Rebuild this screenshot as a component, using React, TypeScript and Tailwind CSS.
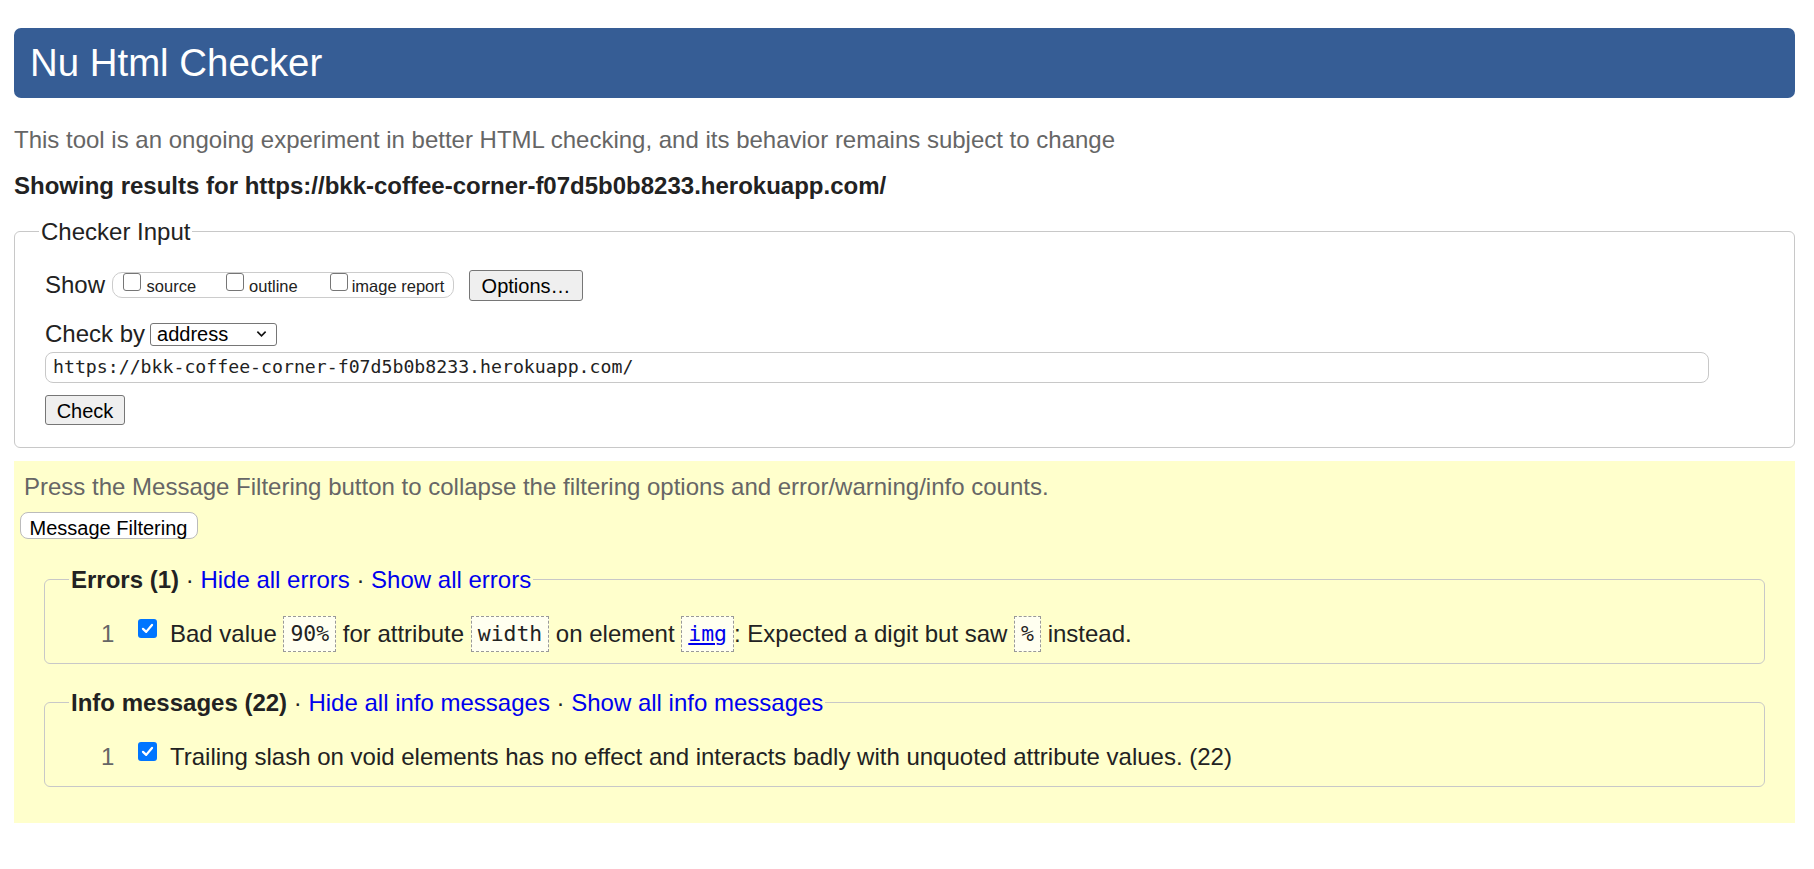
import React from 'react';

function Box({ checked }: { checked?: boolean }) {
  if (checked) {
    return (
      <span className="flex h-[19px] w-[19px] items-center justify-center rounded-[3px] bg-[#0075ff]">
        <svg viewBox="0 0 16 16" className="h-[15px] w-[15px]">
          <path d="M3.2 8.4 L6.6 11.6 L12.8 4.2" fill="none" stroke="#fff" strokeWidth="2.4" strokeLinecap="round" strokeLinejoin="round" />
        </svg>
      </span>
    );
  }
  return <span className="block h-[18px] w-[18px] rounded-[3px] border-[1.5px] border-[#767676] bg-white" />;
}

function Code({ children, link }: { children: React.ReactNode; link?: boolean }) {
  return (
    <code
      className={`inline-block h-[36px] border border-dashed border-[#999] bg-[#fffff0] px-[6px] align-top font-['DejaVu_Sans_Mono',monospace] text-[21.4px] leading-[34px] ${
        link ? 'text-[#0000ee] underline' : 'text-[#222]'
      }`}
    >
      {children}
    </code>
  );
}

function Dot() {
  return <span className="text-[#222]"> · </span>;
}

function Group({
  title,
  hide,
  show,
  children,
}: {
  title: string;
  hide: string;
  show: string;
  children: React.ReactNode;
}) {
  return (
    <fieldset className="mx-[30px] rounded-[6px] border border-[#c8c8c8] pt-[22px] pb-[11px]">
      <legend className="ml-[24px] px-[2px] text-[24px] leading-[28px]">
        <b className="font-bold text-[#222]">{title}</b>
        <Dot />
        <a className="text-[#0000ee]">{hide}</a>
        <Dot />
        <a className="text-[#0000ee]">{show}</a>
      </legend>
      {children}
    </fieldset>
  );
}

function Row({ children }: { children: React.ReactNode }) {
  return (
    <div className="flex h-[36px] items-start pl-[56px]">
      <span className="w-[37px] text-[24px] leading-[36px] text-[#666]">1</span>
      <span className="mt-[3px]">
        <Box checked />
      </span>
      <p className="ml-[13px] whitespace-pre text-[24px] leading-[36px] text-[#222]">{children}</p>
    </div>
  );
}

export default function App() {
  return (
    <div className="min-h-screen bg-white pt-[28px] pr-[19px] pb-[40px] pl-[14px] font-['Liberation_Sans',Arial,sans-serif] text-[#222]">
      {/* Header */}
      <header className="flex h-[70px] items-center rounded-[7px] bg-[#365d95] pl-[16px]">
        <h1 className="text-[38.4px] font-normal leading-none text-white">Nu Html Checker</h1>
      </header>

      <p className="mt-[28px] text-[24px] leading-[28px] text-[#666]">
        This tool is an ongoing experiment in better HTML checking, and its behavior remains subject to change
      </p>
      <p className="mt-[18px] text-[24px] font-bold leading-[28px] text-[#222]">
        Showing results for https://bkk-coffee-corner-f07d5b0b8233.herokuapp.com/
      </p>

      {/* Checker input */}
      <fieldset className="mt-[17.5px] rounded-[6px] border border-[#c8c8c8] px-[30px] pt-[24px] pb-[22px]">
        <legend className="ml-[-6px] px-[2px] text-[24px] leading-[28px]">Checker Input</legend>

        <div className="flex h-[31px] items-center">
          <span className="text-[24px] leading-[28px]">Show</span>
          <div className="ml-[7px] flex h-[26px] w-[342px] items-start rounded-[10px] border border-[#ccc] pl-[10px]">
            <Box />
            <span className="ml-[5.5px] mt-[3.5px] text-[16.5px] leading-[19px]">source</span>
            <span className="ml-[30px]">
              <Box />
            </span>
            <span className="ml-[5px] mt-[3.5px] text-[16.5px] leading-[19px]">outline</span>
            <span className="ml-[32px]">
              <Box />
            </span>
            <span className="ml-[4px] mt-[3.5px] text-[16.5px] leading-[19px]">image report</span>
          </div>
          <button className="ml-[15px] h-[31px] w-[114px] rounded-[3px] border border-[#767676] bg-[#efefef] text-[20px] text-black">
            Options…
          </button>
        </div>

        <div className="mt-[21.5px] flex h-[24px] items-center">
          <span className="text-[24px] leading-[28px]">Check by</span>
          <div className="ml-[5px] flex h-[23px] w-[127px] items-center justify-between rounded-[3px] border border-[#767676] bg-white pl-[6px] pr-[9px]">
            <span className="text-[20px] leading-[22px] text-black">address</span>
            <svg viewBox="0 0 12 8" className="h-[8px] w-[11px]">
              <path d="M1.5 1.5 L6 6 L10.5 1.5" fill="none" stroke="#111" strokeWidth="1.8" />
            </svg>
          </div>
        </div>

        <div className="mt-[5.5px] flex h-[31px] w-[1664px] items-center rounded-[8px] border border-[#c8c8c8] pl-[7px] font-['DejaVu_Sans_Mono',monospace] text-[18.2px] text-[#222]">
          https://bkk-coffee-corner-f07d5b0b8233.herokuapp.com/
        </div>

        <button className="mt-[12.5px] h-[30px] w-[80px] rounded-[3px] border border-[#767676] bg-[#efefef] text-[20px] text-black">
          Check
        </button>
      </fieldset>

      {/* Results */}
      <section className="mt-[12.5px] bg-[#ffffcc] pt-[12px] pb-[36px]">
        <p className="pl-[10px] text-[24px] leading-[28px] text-[#666]">
          Press the Message Filtering button to collapse the filtering options and error/warning/info counts.
        </p>
        <button className="ml-[5.5px] mt-[11px] h-[27px] w-[178px] rounded-[8px] border border-[#bbb] bg-white text-[20px] text-black">
          Message Filtering
        </button>

        <div className="mt-[24px]">
          <Group title="Errors (1)" hide="Hide all errors" show="Show all errors">
            <Row>
              Bad value <Code>90%</Code> for attribute <Code>width</Code> on element <Code link>img</Code>: Expected a
              digit but saw <Code>%</Code> instead.
            </Row>
          </Group>
        </div>

        <div className="mt-[25px]">
          <Group title="Info messages (22)" hide="Hide all info messages" show="Show all info messages">
            <Row>
              Trailing slash on void elements has no effect and interacts badly with unquoted attribute values. (22)
            </Row>
          </Group>
        </div>
      </section>
    </div>
  );
}
